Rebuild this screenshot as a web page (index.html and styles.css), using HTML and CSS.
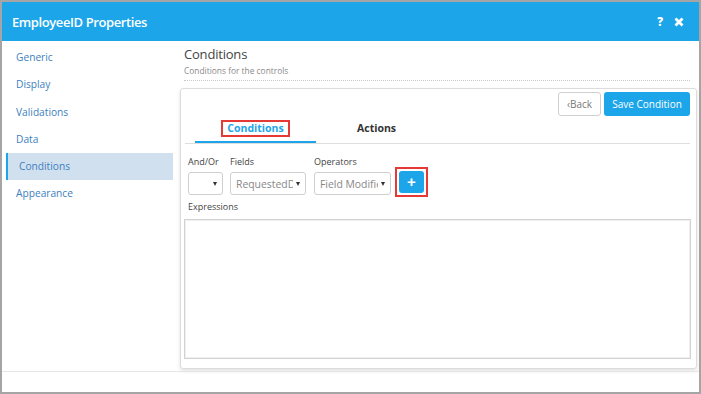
FILE: index.html
```html
<!DOCTYPE html>
<html lang="en">
<head>
    <meta charset="UTF-8">
    <meta name="viewport" content="width=device-width, initial-scale=1.0">
    <title>EmployeeID Properties</title>
    <link rel="stylesheet" href="styles.css">
</head>
<body>

    <div class="window">
        <div class="titlebar">
            <h1>EmployeeID Properties</h1>
            <div class="title-icons">
                <span class="help">?</span>
                <svg class="close" width="10" height="10" viewBox="0 0 10 10"><path d="M1.5 1.5 L8.5 8.5 M8.5 1.5 L1.5 8.5" stroke="#fff" stroke-width="2.8"/></svg>
            </div>
        </div>

        <div class="content">
            <ul class="sidebar">
                <li>Generic</li>
                <li>Display</li>
                <li>Validations</li>
                <li>Data</li>
                <li class="active">Conditions</li>
                <li>Appearance</li>
            </ul>

            <div class="main">
                <div class="page-head">
                    <h2>Conditions</h2>
                    <p>Conditions for the controls</p>
                </div>

                <div class="card">
                    <div class="toolbar">
                        <button class="btn btn-back">&lsaquo;Back</button>
                        <button class="btn btn-primary">Save Condition</button>
                    </div>

                    <div class="tabs">
                        <div class="tab active"><span class="highlight">Conditions</span></div>
                        <div class="tab">Actions</div>
                    </div>

                    <div class="form-row">
                        <div class="field">
                            <label>And/Or</label>
                            <div class="select sel-andor"><span></span><i class="caret"></i></div>
                        </div>
                        <div class="field">
                            <label>Fields</label>
                            <div class="select sel-fields"><span>RequestedDate</span><i class="caret"></i></div>
                        </div>
                        <div class="field">
                            <label>Operators</label>
                            <div class="select sel-ops"><span>Field Modified</span><i class="caret"></i></div>
                        </div>
                        <div class="add-box">
                            <button class="btn-add">+</button>
                        </div>
                    </div>

                    <label class="expr-label">Expressions</label>
                    <textarea class="expressions"></textarea>
                </div>
            </div>
        </div>

        <div class="footer"></div>
    </div>

</body>
</html>
```

FILE: styles.css
```css
body { margin: 0; font-family: "Open Sans", Arial, sans-serif; background: #a5a5a5; }
.window { width: 701px; height: 394px; box-sizing: border-box; border: 2px solid #a5a5a5; background: #fff; display: flex; flex-direction: column; }

.titlebar { height: 39px; background: #1da5ea; display: flex; align-items: center; justify-content: space-between; padding: 0 15px 0 10px; flex-shrink: 0; }
.titlebar h1 { margin: 0; font-size: 13px; font-weight: 600; color: #fff; letter-spacing: -0.4px; }
.title-icons { display: flex; align-items: center; gap: 11px; }
.help { color: #fff; font-weight: 800; font-size: 11.5px; }

.content { flex: 1; display: flex; min-height: 0; }

.sidebar { list-style: none; margin: 0; padding: 3px 1px 0 4px; width: 167px; flex-shrink: 0; }
.sidebar li { height: 27.3px; line-height: 27.3px; padding-left: 10px; font-size: 10.2px; color: #3d7fc0; }
.sidebar li.active { background: #d1e0ef; border-left: 2px solid #1da5ea; padding-left: 11px; }

.main { flex: 1; padding-top: 4px; min-width: 0; }
.page-head { margin: 0 9px 0 10px; border-bottom: 1px dotted #c8c8c8; padding-bottom: 3px; }
.page-head h2 { margin: 0; font-size: 13px; line-height: 18px; font-weight: 400; color: #444; letter-spacing: -0.2px; }
.page-head p { margin: 2px 0 0; font-size: 8.4px; line-height: 12px; color: #8a8a8a; }

.card { margin: 7px 2px 0 6px; border: 1px solid #dcdcdc; border-radius: 3px; box-shadow: 0 2px 4px rgba(0, 0, 0, 0.12); padding: 3px 6px 9px 4px; }

.toolbar { display: flex; justify-content: flex-end; gap: 3px; }
.btn { height: 24px; border-radius: 3px; font-family: "Open Sans", Arial, sans-serif; font-size: 10px; padding: 0; cursor: pointer; }
.btn-back { width: 43px; background: #fff; border: 1px solid #d0d0d0; color: #777; }
.btn-primary { width: 86px; background: #1da5ea; border: none; color: #fff; }

.tabs { margin-top: 4px; display: flex; padding-left: 10px; border-bottom: 1px solid #dedede; }
.tab { width: 121px; height: 17px; line-height: 17px; padding-bottom: 4px; border-bottom: 2px solid transparent; text-align: center; font-size: 10.5px; font-weight: 700; color: #333; }
.tab.active { border-bottom-color: #1da5ea; color: #1da5ea; }
.highlight { display: inline-block; border: 2px solid #e53935; line-height: 13px; padding: 0 4px; }

.form-row { display: flex; align-items: flex-end; margin-top: 12px; padding-left: 3px; }
.field { display: flex; flex-direction: column; margin-right: 7px; }
.field:nth-child(2) { margin-right: 8px; }
.field label { font-size: 9px; line-height: 12px; color: #444; margin-bottom: 4px; }
.select { height: 23px; box-sizing: border-box; border: 1px solid #cfcfcf; border-radius: 3px; display: flex; align-items: center; padding: 0 5px 0 5px; font-size: 10.4px; color: #888; }
.select span { flex: 1; overflow: hidden; white-space: nowrap; }
.caret { width: 0; height: 0; border-left: 2.5px solid transparent; border-right: 2.5px solid transparent; border-top: 4px solid #333; margin-left: 3px; flex-shrink: 0; }
.sel-andor { width: 35px; }
.sel-fields { width: 76px; }
.sel-ops { width: 77px; }

.add-box { border: 2px solid #e53935; padding: 2px; margin-left: -3px; margin-bottom: -2px; display: flex; }
.btn-add { width: 25px; height: 22px; border: none; border-radius: 3px; background: #1da5ea; color: #fff; font-size: 15px; font-weight: 700; line-height: 22px; padding: 0; font-family: Arial, sans-serif; }

.expr-label { display: block; margin-top: 6px; font-size: 9px; line-height: 12px; color: #444; padding-left: 3px; }
.expressions { display: block; margin: 6px 0 0 -1px; width: 507px; height: 140px; box-sizing: border-box; border: 1px solid #d2d2d2; box-shadow: inset 0 0 0 1px #f0f0f0; resize: none; }

.footer { height: 20px; border-top: 1px solid #e6e6e6; flex-shrink: 0; }
```
